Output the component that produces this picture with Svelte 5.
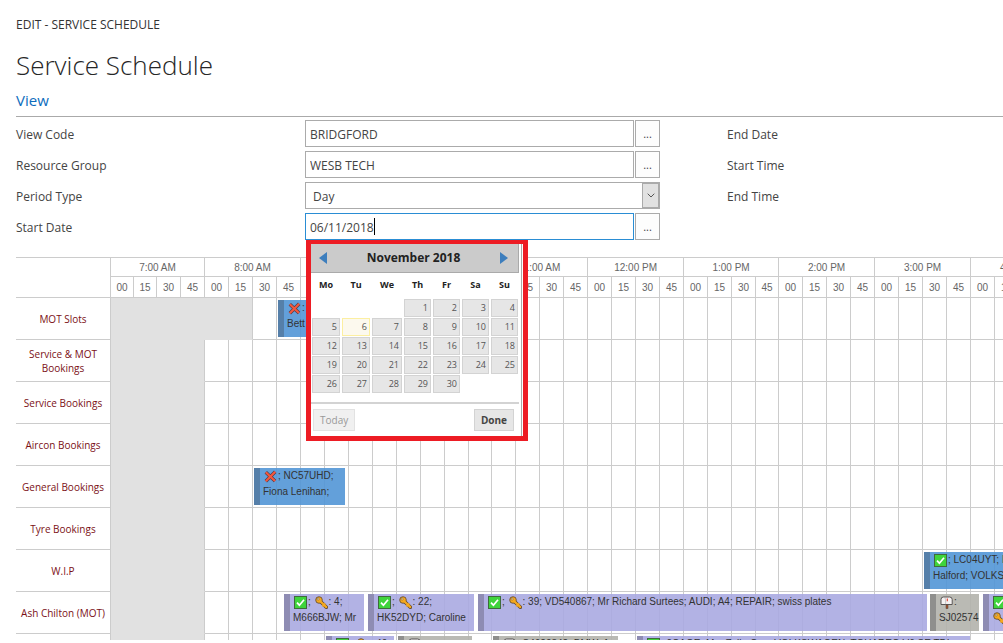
<script lang="ts">
  type Token = 'check' | 'key' | 'cross' | 'mail' | string;
  interface Booking { start: number; width: number; tone: string; lines: Token[][] }
  interface Resource { name: string; closed: number; bookings: Booking[] }

  const hours = [
    { label: '7:00 AM', slots: [23, 23, 24, 24] },
    { label: '8:00 AM', slots: [24, 24, 24, 24] },
    { label: '9:00 AM', slots: [24, 24, 24, 24] },
    { label: '10:00 AM', slots: [24, 24, 24, 23] },
    { label: '11:00 AM', slots: [24, 24, 24, 24] },
    { label: '12:00 PM', slots: [24, 24, 24, 24] },
    { label: '1:00 PM', slots: [24, 24, 24, 23] },
    { label: '2:00 PM', slots: [24, 24, 24, 24] },
    { label: '3:00 PM', slots: [24, 24, 24, 24] },
    { label: '4:00 PM', slots: [24, 24, 24, 24] }
  ];
  const minutes = ['00', '15', '30', '45'];
  const slots = hours.flatMap((h) => h.slots);
  const timelineWidth = 95 + slots.reduce((a, b) => a + b, 0);

  const resources: Resource[] = [
    { name: 'MOT Slots', closed: 6, bookings: [
      { start: 167, width: 92, tone: 'blue', lines: [['cross', ':'], ['Bett']] } ] },
    { name: 'Service & MOT Bookings', closed: 4, bookings: [] },
    { name: 'Service Bookings', closed: 4, bookings: [] },
    { name: 'Aircon Bookings', closed: 4, bookings: [] },
    { name: 'General Bookings', closed: 4, bookings: [
      { start: 143, width: 91, tone: 'blue', lines: [['cross', '; NC57UHD;'], ['Fiona Lenihan;']] } ] },
    { name: 'Tyre Bookings', closed: 4, bookings: [] },
    { name: 'W.I.P', closed: 4, bookings: [
      { start: 813, width: 130, tone: 'blue', lines: [['check', '; LC04UYT; Mr'], ['Halford; VOLKSWAGEN']] } ] },
    { name: 'Ash Chilton (MOT)', closed: 4, bookings: [
      { start: 173, width: 80, tone: 'violet', lines: [['check', '; ', 'key', ': 4;'], ['M666BJW; Mr']] },
      { start: 257, width: 106, tone: 'violet', lines: [['check', '; ', 'key', ': 22;'], ['HK52DYD; Caroline']] },
      { start: 367, width: 449, tone: 'violet', lines: [['check', '; ', 'key', ': 39; VD540867; Mr Richard Surtees; AUDI; A4; REPAIR; swiss plates']] },
      { start: 819, width: 49, tone: 'grey', lines: [['mail', ':'], ['SJ02574']] },
      { start: 872, width: 90, tone: 'violet', lines: [['check', ';'], ['key', ': 12;']] } ] },
    { name: '', closed: 4, bookings: [
      { start: 215, width: 68, tone: 'violet', lines: [['check', '; ', 'key', ': 40;']] },
      { start: 287, width: 74, tone: 'grey', lines: [['mail', ':']] },
      { start: 382, width: 125, tone: 'grey', lines: [['mail', ': S4620342; BMW; 1']] },
      { start: 526, width: 333, tone: 'violet', lines: [['check', ': 0CAGE; Mrs Zella Gun; VOLKSWAGEN; TOUAREG V6 SE TDI']] } ] }
  ];

  const weekdays = ['Mo', 'Tu', 'We', 'Th', 'Fr', 'Sa', 'Su'];
  const weeks = [0, 1, 2, 3, 4].map((w) =>
    weekdays.map((_, d) => {
      const n = w * 7 + d - 2;
      return n >= 1 && n <= 30 ? n : 0;
    })
  );
  let startDate = $state('06/11/2018');
</script>

{#snippet glyph(kind: string)}
  {#if kind === 'check'}
    <svg class="glyph" viewBox="0 0 13 13" aria-label="Confirmed">
      <rect x="0.5" y="0.5" width="12" height="12" fill="#3fd43c" stroke="#3f6b3c" />
      <path d="M3 6.7 5.4 9.2 10 3.8" fill="none" stroke="#fff" stroke-width="1.7" />
    </svg>
  {:else if kind === 'cross'}
    <svg class="glyph" viewBox="0 0 13 13" aria-label="Not arrived">
      <path d="M1.8 2.2 11 11M11.2 1.8 1.8 11.2" stroke="#4d3c4c" stroke-width="3.4" />
      <path d="M1.8 2.2 11 11M11.2 1.8 1.8 11.2" stroke="#f4573d" stroke-width="2.2" />
    </svg>
  {:else if kind === 'key'}
    <svg class="glyph" viewBox="0 0 13 13" aria-label="Key">
      <path d="M5.5 5.5 11.4 11.2" stroke="#5b4630" stroke-width="3.6" stroke-linecap="round" />
      <circle cx="4" cy="4" r="3.3" fill="#f6a91f" stroke="#5b4630" stroke-width=".8" />
      <path d="M5.5 5.5 11.3 11.1M8.2 9.6 9.6 8.2" stroke="#f6a91f" stroke-width="2.2" stroke-linecap="round" />
      <circle cx="3.1" cy="3.1" r="1" fill="#fff0c8" stroke="#5b4630" stroke-width=".5" />
    </svg>
  {:else}
    <svg class="glyph" viewBox="0 0 13 13" aria-label="Message">
      <path d="M6 8h2v4.6H6z" fill="#a5552e" stroke="#4d3a34" stroke-width=".5" />
      <path d="M1 8.5V3.6Q1 1 3.4 1H9.6Q12.2 1 12.2 3.6V8.5Z" fill="#f4f1f1" stroke="#4c4747" stroke-width=".9" />
      <path d="M5.6 8.3V3.4Q5.4 1.4 3.4 1.2" fill="none" stroke="#aaa" stroke-width=".6" />
      <path d="M7.3 5.2V2.4" fill="none" stroke="#e33b2c" stroke-width="1.1" />
    </svg>
  {/if}
{/snippet}

<main>
  <p class="crumb">EDIT - SERVICE SCHEDULE</p>
  <h1>Service Schedule</h1>
  <h2>View</h2>

  <form class="fields" onsubmit={(e) => e.preventDefault()}>
    <label for="view-code">View Code</label>
    <div class="control">
      <input id="view-code" type="text" value="BRIDGFORD" />
      <button type="button" class="lookup" aria-label="Look up view code">...</button>
    </div>
    <span class="right">End Date</span>

    <label for="group">Resource Group</label>
    <div class="control">
      <input id="group" type="text" value="WESB TECH" />
      <button type="button" class="lookup" aria-label="Look up resource group">...</button>
    </div>
    <span class="right">Start Time</span>

    <label for="period">Period Type</label>
    <div class="control select">
      <select id="period"><option>Day</option><option>Week</option></select>
      <span class="arrow"><svg viewBox="0 0 8 5"><path d="M.7.7 4 4 7.3.7" fill="none" stroke="#555" /></svg></span>
    </div>
    <span class="right">End Time</span>

    <label for="start">Start Date</label>
    <div class="control">
      <div class="typed">
        <input id="start" class="active" type="text" bind:value={startDate} />
        <span class="caret-line"><span class="ghost">{startDate}</span></span>
      </div>
      <button type="button" class="lookup" aria-label="Pick start date">...</button>

      <div class="popup">
        <div class="picker">
          <div class="month">
            <button type="button" aria-label="Previous month"><svg viewBox="0 0 8 12"><path d="M8 0V12L0 6Z" fill="#3d7ebd" /></svg></button>
            <strong>November 2018</strong>
            <button type="button" aria-label="Next month"><svg viewBox="0 0 8 12"><path d="M0 0V12L8 6Z" fill="#3d7ebd" /></svg></button>
          </div>
          <table class="days">
            <colgroup><col class="w30" /><col class="w30" /><col class="w32" /><col /><col /><col /><col /></colgroup>
            <thead><tr>{#each weekdays as d}<th>{d}</th>{/each}</tr></thead>
            <tbody>
              {#each weeks as week}
                <tr>{#each week as n}<td>{#if n}<button type="button" class:today={n === 6}>{n}</button>{/if}</td>{/each}</tr>
              {/each}
            </tbody>
          </table>
          <div class="actions">
            <button type="button" class="dim">Today</button>
            <button type="button" class="done">Done</button>
          </div>
        </div>
      </div>
    </div>
    <span class="right"></span>
  </form>

  <section class="schedule">
    <table class="timeline" style:width="{timelineWidth}px">
      <colgroup>
        <col style:width="95px" />
        {#each slots as w}<col style:width="{w}px" />{/each}
      </colgroup>
      <thead>
        <tr class="hours">
          <th rowspan="2"></th>
          {#each hours as h}<th colspan="4">{h.label}</th>{/each}
        </tr>
        <tr class="minutes">{#each slots as _, i}<th>{minutes[i % 4]}</th>{/each}</tr>
      </thead>
      <tbody>
        {#each resources as r}
          <tr>
            <th scope="row">{r.name}</th>
            {#each slots as _, i}
              <td class:closed={i < r.closed} class:edge={i === r.closed - 1}>
                {#if i === 0}
                  {#each r.bookings as b}
                    <div class="booking {b.tone}" style:left="{b.start}px" style:width="{b.width}px">
                      {#each b.lines as line}
                        <div class="line">{#each line as t}{#if ['check', 'key', 'cross', 'mail'].includes(t)}{@render glyph(t)}{:else}<span>{t}</span>{/if}{/each}</div>
                      {/each}
                    </div>
                  {/each}
                {/if}
              </td>
            {/each}
          </tr>
        {/each}
      </tbody>
    </table>
  </section>
</main>

<style>
  :global(body) { background: #fff; overflow: hidden; }
  * { box-sizing: border-box; }
  main {
    height: 100vh;
    padding: 15px 0 3px 16px;
    display: flex;
    flex-direction: column;
    font: 12px/20px 'Open Sans', 'Noto Sans', sans-serif;
    color: #444;
  }
  .crumb { margin: 0; color: #333; line-height: 20px; }
  h1 { margin: 8px 0 0; font-size: 26px; line-height: 44px; font-weight: 300; color: #262626; }
  h2 { margin: 1px 0 0; padding: 1px 0 4px; font-size: 15px; line-height: 23px; font-weight: 400; color: #0c6cbd; border-bottom: 1px solid #aaa; }
  button, input, select { font: inherit; color: inherit; margin: 0; }

  .fields {
    margin-top: 3px;
    display: grid;
    grid-template-columns: 289fr 355fr 343fr;
    row-gap: 4px;
    align-items: center;
  }
  .fields label, .right { padding-top: 2px; }
  .right { padding-left: 67px; }
  .control { position: relative; display: flex; gap: 1px; height: 27px; min-width: 0; }
  .control input, .control select {
    flex: 1; min-width: 0; width: 100%; height: 27px; padding: 2px 4px 0;
    border: 1px solid #ababab; border-radius: 0; background: #fff; outline: 0;
  }
  .control input.active { border-color: #2a8dd4; }
  .control select { appearance: none; padding-left: 7px; }
  .typed { position: relative; flex: 1; }
  .caret-line { position: absolute; left: 5px; top: 5px; height: 17px; border-right: 1px solid #000; pointer-events: none; }
  .ghost { visibility: hidden; }
  .lookup { width: 25px; padding: 0; background: #fdfdfd; border: 1px solid #ababab; font-size: 11px; }
  .arrow {
    position: absolute; right: 1px; top: 1px; bottom: 1px; width: 17px; pointer-events: none;
    display: flex; align-items: center; justify-content: center; background: #e1e1e1; border: 1px solid #aaa;
  }
  .arrow svg { width: 8px; height: 5px; }

  .popup { position: absolute; z-index: 5; left: 1px; top: 27px; width: 222px; border: 5px solid #ed1c24; border-top-width: 4px; background: #fff; }
  .picker { margin-right: 1px; padding-right: 2px; border-right: 1px solid #aaa; }
  .month {
    display: flex; align-items: center; justify-content: space-between; height: 29px; padding: 0 10px 0 8px;
    background: #cbcbcb; border: 1px solid #aaa; border-width: 0 1px 1px 0; color: #222; font-size: 12px;
  }
  .month button { padding: 0; border: 0; background: none; display: flex; }
  .month svg { width: 8px; height: 12px; }
  .days { border-collapse: collapse; table-layout: fixed; width: 100%; }
  .days .w30 { width: 30px; }
  .days .w32 { width: 32px; }
  .days th { height: 26px; padding: 0 0 2px; font-size: 9px; line-height: 12px; color: #222; text-align: center; }
  .days td { height: 19px; padding: 0 1px 1px; }
  .days td button {
    display: block; width: 100%; height: 18px; padding: 0 2px; text-align: right;
    font-size: 9px; line-height: 16px; color: #555; background: #e6e6e6; border: 1px solid #d3d3d3;
  }
  .days td button.today { background: #fcf9ee; border-color: #fcefa1; }
  .actions { margin-top: 8px; border-top: 2px solid #d3d3d3; padding: 5px 5px 5px 2px; display: flex; justify-content: space-between; }
  .actions button { height: 22px; padding: 0 6px; line-height: 18px; font-size: 10px; background: #e6e6e6; border: 1px solid #d3d3d3; }
  .actions .dim { color: #999; background: #f0f0f0; border-color: #e2e2e2; }
  .actions .done { font-weight: 700; }

  .schedule { margin-top: 17px; flex: 1; min-height: 0; overflow: hidden; }
  .timeline { table-layout: fixed; border-collapse: separate; border-spacing: 0; border-top: 1px solid #ccc; }
  .timeline th, .timeline td { padding: 0; font-weight: 400; border: 1px solid #ccc; border-width: 0 1px 1px 0; }
  .timeline thead th { font: 10px/16px 'Liberation Sans', Arial, sans-serif; color: #666; text-align: center; }
  .timeline .hours th { height: 19px; padding-top: 2px; }
  .timeline .minutes th { height: 21px; padding-top: 2px; }
  .timeline tbody th { height: 42px; padding: 0 2px; font-size: 10px; line-height: 14px; color: #7b1016; text-align: center; }
  .timeline td { position: relative; }
  .timeline td.closed { background: #e1e1e1; border-color: #e1e1e1; }
  .timeline td.edge { border-right-color: #ccc; }
  .booking {
    position: absolute; z-index: 1; top: 2px; height: 37px; overflow: hidden; padding-left: 9px;
    font: 10px/16px 'Liberation Sans', Arial, sans-serif; color: #333; white-space: pre;
  }
  .line { height: 16px; display: flex; align-items: center; }
  .glyph { flex: none; width: 13px; height: 13px; margin: 0 1px; }
  .blue { background: rgba(82, 150, 214, .9); box-shadow: inset 6px 0 #557fa9; }
  .violet { background: rgba(170, 170, 225, .9); box-shadow: inset 6px 0 #8e8cb3; }
  .grey { background: rgba(178, 178, 172, .9); box-shadow: inset 6px 0 #8f8f8d; }
</style>
